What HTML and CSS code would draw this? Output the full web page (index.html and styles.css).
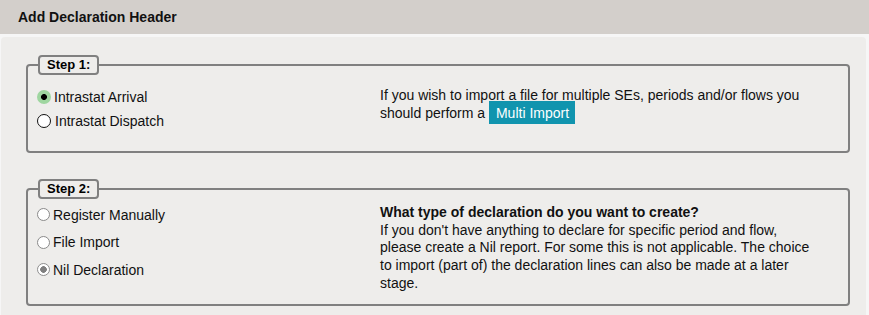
FILE: index.html
```html
<!DOCTYPE html>
<html lang="en">
<head>
    <meta charset="UTF-8">
    <title>Add Declaration Header</title>
    <link rel="stylesheet" href="styles.css">
</head>
<body>

    <div class="header">Add Declaration Header</div>

    <div class="panel">

        <!-- step 1: flow -->
        <fieldset class="step step-one">
            <legend>Step 1:</legend>
            <div class="cols">
                <div class="options">
                    <label class="opt"><input type="radio" class="big" name="flow" checked> Intrastat Arrival</label>
                    <label class="opt"><input type="radio" class="big" name="flow"> Intrastat Dispatch</label>
                </div>
                <div class="info">
                    If you wish to import a file for multiple SEs, periods and/or flows you should perform a <span class="btn">Multi Import</span>
                </div>
            </div>
        </fieldset>

        <!-- step 2: type -->
        <fieldset class="step step-two">
            <legend>Step 2:</legend>
            <div class="cols">
                <div class="options">
                    <label class="opt"><input type="radio" class="small" name="type">Register Manually</label>
                    <label class="opt"><input type="radio" class="small" name="type">File Import</label>
                    <label class="opt"><input type="radio" class="small" name="type" checked>Nil Declaration</label>
                </div>
                <div class="info">
                    <b>What type of declaration do you want to create?</b><br>
                    If you don't have anything to declare for specific period and flow,<br>
                    please create a Nil report. For some this is not applicable. The choice to import (part of) the declaration lines can also be made at a later stage.
                </div>
            </div>
        </fieldset>

    </div>

</body>
</html>
```

FILE: styles.css
```css
body { margin: 0; background: #f6f6f6; font-family: "Liberation Sans", Arial, sans-serif; font-size: 14px; color: #111; }
.header { height: 34px; line-height: 34px; padding-left: 18px; font-weight: bold; background: #d3cfcb; }
.panel { margin: 3px 3px 0 1px; padding: 18px 16px 12px 25px; background: #eeedeb; border-radius: 4px 4px 0 0; }

.step { margin: 0; padding: 0 0 0 9px; border: 2px solid #808080; border-radius: 4px; }
.step + .step { margin-top: 26px; }
.step legend { margin-left: 1px; padding: 0 7px; font-size: 13px; line-height: 16px; font-weight: bold; color: #000; border: 2px solid #808080; border-radius: 4px; }

.cols { display: grid; grid-template-columns: 343px 440px; align-items: start; }
.opt { display: flex; align-items: center; }
.info { line-height: 17.7px; }

.step-one { padding-bottom: 18px; }
.step-one .options { padding-top: 10px; }
.step-one .opt { height: 24px; }
.step-one .info { padding-top: 12px; }

.step-two { padding-bottom: 11px; }
.step-two .options { padding-top: 2px; }
.step-two .opt { height: 27.5px; }
.step-two .info { padding-top: 5px; }

input[type=radio] { appearance: none; margin: 0; flex: none; border-radius: 50%; }
input.big { width: 14px; height: 14px; margin-right: 4px; background: #fff; border: 1.5px solid #111; box-sizing: border-box; }
input.big:checked { border: none; background: radial-gradient(circle, #000 2.6px, #9fd6a0 3.3px); margin-right: 3px; }
input.small { width: 13px; height: 13px; margin-right: 3px; background: #fff; border: 1px solid #8a8a8a; box-sizing: border-box; }
input.small:checked { border: 1px solid #8f8f8f; background: radial-gradient(circle, #808080 3px, #fff 3.6px); }

.btn { padding: 3.5px 6px 3.5px 7px; background: #1194ae; color: #fff; }
```
